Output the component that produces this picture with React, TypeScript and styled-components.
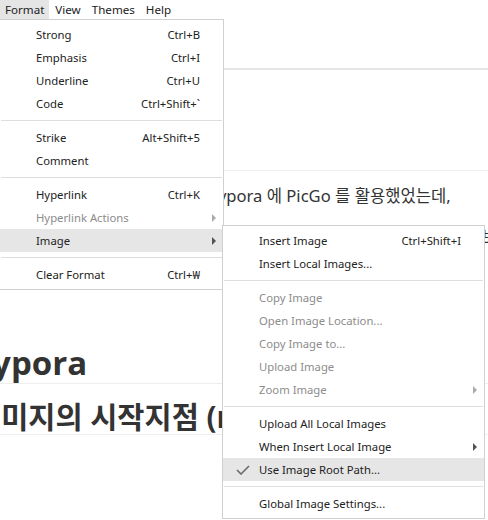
import React from "react";
import styled, { createGlobalStyle } from "styled-components";

const GlobalStyle = createGlobalStyle`
  html, body {
    margin: 0;
    padding: 0;
    background: #fff;
  }
  body {
    overflow: hidden;
    font-family: "Noto Sans", "Noto Sans CJK KR", sans-serif;
  }
`;

const Screen = styled.div`
  position: relative;
  width: 488px;
  height: 520px;
  overflow: hidden;
  background: #fff;
`;

const MenuBar = styled.div`
  display: flex;
  height: 19px;
`;

const BarItem = styled.div<{ $active?: boolean }>`
  display: flex;
  align-items: center;
  padding: 0 5px 0 5px;
  margin-right: 1px;
  font-size: 11.6px;
  color: #222;
  background: ${(p) => (p.$active ? "#e5e5e5" : "transparent")};
`;

const Doc = styled.div`
  width: 780px;
  margin-left: -27px;
  color: #333;
`;

const TopRule = styled.div`
  height: 49px;
  border-bottom: 2px solid #e6e6e6;
`;

const Rule = styled.div<{ $gap: number }>`
  margin-top: ${(p) => p.$gap}px;
  border-bottom: 1px solid #efefef;
`;

const Para = styled.p<{ $gap: number; $indent: number }>`
  margin: ${(p) => p.$gap}px 0 0;
  padding-left: ${(p) => p.$indent}px;
  font-size: 16.6px;
  line-height: 24px;
  white-space: nowrap;
  font-family: "Noto Sans", "Noto Sans CJK KR", sans-serif;
`;

const H1 = styled.h1`
  margin: 94px 0 0;
  font-size: 33px;
  line-height: 40px;
  font-weight: 700;
  border-bottom: 1px solid #eee;
  font-family: "Open Sans", "Noto Sans CJK KR", sans-serif;
`;

const H2 = styled.h2`
  margin: 16px 0 0;
  padding-left: 1px;
  font-size: 29.5px;
  line-height: 34px;
  font-weight: 700;
  white-space: nowrap;
  border-bottom: 1px solid #eee;
  font-family: "Open Sans", "Noto Sans CJK KR", sans-serif;
`;

const Menu = styled.div<{ $top: number; $left: number; $width: number }>`
  position: absolute;
  top: ${(p) => p.$top}px;
  left: ${(p) => p.$left}px;
  width: ${(p) => p.$width}px;
  box-sizing: border-box;
  background: #fff;
  border: 1px solid #d0d0d0;
  padding: 3px 0;
  display: flex;
  flex-direction: column;
`;

const Row = styled.div<{ $hover?: boolean; $disabled?: boolean }>`
  display: grid;
  grid-template-columns: 36px 1fr auto 23px;
  align-items: center;
  height: 23px;
  font-size: 11.3px;
  color: ${(p) => (p.$disabled ? "#8c8c8c" : "#222")};
  background: ${(p) => (p.$hover ? "#e6e6e6" : "transparent")};
`;

const Check = styled.span`
  display: flex;
  justify-content: center;
  padding-left: 4px;
`;

const Shortcut = styled.span`
  text-align: right;
`;

const Arrow = styled.span<{ $disabled?: boolean }>`
  justify-self: start;
  margin-left: 12px;
  width: 0;
  height: 0;
  border-top: 4px solid transparent;
  border-bottom: 4px solid transparent;
  border-left: 4px solid ${(p) => (p.$disabled ? "#aaa" : "#555")};
`;

const Separator = styled.div`
  margin: 5px 1px;
  border-top: 1px solid #dedede;
`;

type Item =
  | "sep"
  | {
      label: string;
      key?: string;
      sub?: boolean;
      disabled?: boolean;
      hover?: boolean;
      checked?: boolean;
    };

const formatItems: Item[] = [
  { label: "Strong", key: "Ctrl+B" },
  { label: "Emphasis", key: "Ctrl+I" },
  { label: "Underline", key: "Ctrl+U" },
  { label: "Code", key: "Ctrl+Shift+`" },
  "sep",
  { label: "Strike", key: "Alt+Shift+5" },
  { label: "Comment" },
  "sep",
  { label: "Hyperlink", key: "Ctrl+K" },
  { label: "Hyperlink Actions", sub: true, disabled: true },
  { label: "Image", sub: true, hover: true },
  "sep",
  { label: "Clear Format", key: "Ctrl+₩" },
];

const imageItems: Item[] = [
  { label: "Insert Image", key: "Ctrl+Shift+I" },
  { label: "Insert Local Images..." },
  "sep",
  { label: "Copy Image", disabled: true },
  { label: "Open Image Location...", disabled: true },
  { label: "Copy Image to...", disabled: true },
  { label: "Upload Image", disabled: true },
  { label: "Zoom Image", sub: true, disabled: true },
  "sep",
  { label: "Upload All Local Images" },
  { label: "When Insert Local Image", sub: true },
  { label: "Use Image Root Path...", hover: true, checked: true },
  "sep",
  { label: "Global Image Settings..." },
];

const CheckIcon = () => (
  <svg width="14" height="10" viewBox="0 0 14 10">
    <polyline
      points="1,5 5,9 13,1"
      fill="none"
      stroke="#6a6a6a"
      strokeWidth="1.6"
    />
  </svg>
);

const MenuList = ({ items }: { items: Item[] }) => (
  <>
    {items.map((it, i) =>
      it === "sep" ? (
        <Separator key={i} />
      ) : (
        <Row key={i} $hover={it.hover} $disabled={it.disabled}>
          <Check>{it.checked && <CheckIcon />}</Check>
          <span>{it.label}</span>
          <Shortcut>{it.key}</Shortcut>
          {it.sub ? <Arrow $disabled={it.disabled} /> : <span />}
        </Row>
      )
    )}
  </>
);

export default function App() {
  return (
    <Screen>
      <GlobalStyle />
      <MenuBar>
        <BarItem $active>Format</BarItem>
        <BarItem>View</BarItem>
        <BarItem>Themes</BarItem>
        <BarItem>Help</BarItem>
      </MenuBar>
      <Doc>
        <TopRule />
        <Rule $gap={100} />
        <Para $gap={13} $indent={236}>
          Typora 에 PicGo 를 활용했었는데,
        </Para>
        <Para $gap={17} $indent={27}>
          이번에 새로 바꾼 환경에서는 이미지 업로드 방식을 조금 다르게 설정해보려고 한다 를
        </Para>
        <H1>Typora</H1>
        <H2>이미지의 시작지점 (root)</H2>
      </Doc>
      <Menu $top={19} $left={-1} $width={225}>
        <MenuList items={formatItems} />
      </Menu>
      <Menu $top={225} $left={222} $width={263}>
        <MenuList items={imageItems} />
      </Menu>
    </Screen>
  );
}
